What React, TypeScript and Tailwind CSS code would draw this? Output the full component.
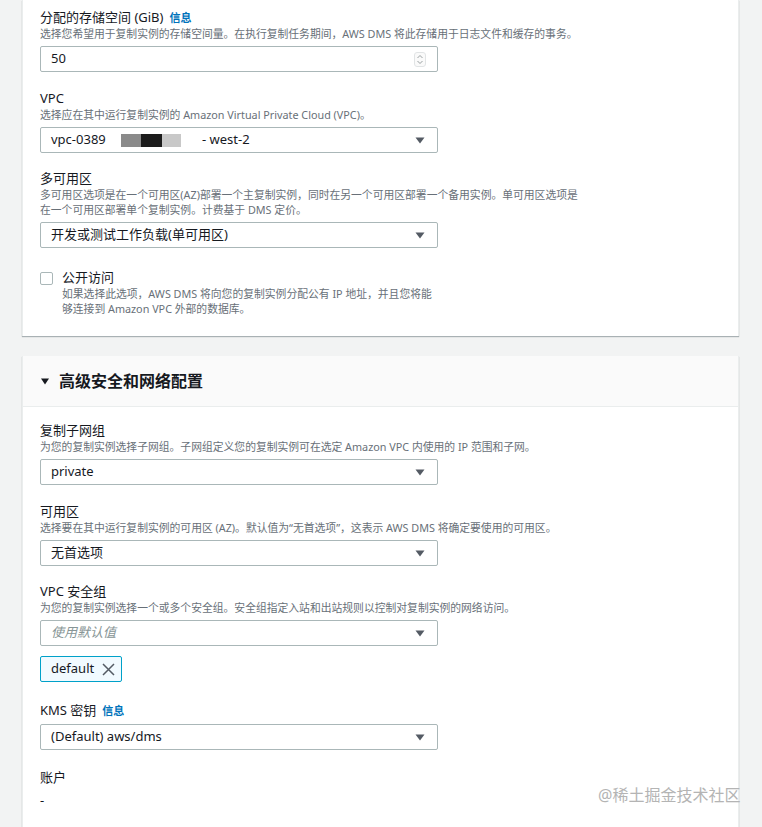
import React from "react";

function Label({ children, info }: { children: React.ReactNode; info?: boolean }) {
  return (
    <div className="text-[13px] leading-[17px] text-[#16191f]">
      {children}
      {info && <span className="ml-[6px] text-[11px] font-bold text-[#0073bb]">信息</span>}
    </div>
  );
}

function Desc({ children }: { children: React.ReactNode }) {
  return <div className="text-[10.8px] leading-[15px] text-[#687078]">{children}</div>;
}

function Caret() {
  return (
    <svg width="10" height="7" viewBox="0 0 10 7" className="shrink-0">
      <path d="M0.5 0.5h9L5 6.5z" fill="#545b64" />
    </svg>
  );
}

function Select({ children, placeholder }: { children?: React.ReactNode; placeholder?: string }) {
  return (
    <div className="mt-[5px] flex h-[26px] w-[398px] items-center justify-between rounded-[2px] border border-[#aab7b8] bg-white pl-[10px] pr-[12px] text-[13px] text-[#16191f]">
      {placeholder ? (
        <span className="italic text-[#879596]">{placeholder}</span>
      ) : (
        <div className="flex items-center">{children}</div>
      )}
      <Caret />
    </div>
  );
}

export default function App() {
  return (
    <div className="relative min-h-[827px] bg-[#f2f3f3] pl-[22px] pr-[23px] pb-[20px] font-['Noto_Sans','Noto_Sans_CJK_SC',sans-serif]">
      {/* 第一张卡片（顶部已滚出视口） */}
      <div className="border-x border-[#eaeded] bg-white px-[17px] pt-[9px] pb-[20px] shadow-[0_1px_1px_0_rgba(0,28,36,0.3)]">
        <div>
          <Label info>分配的存储空间 (GiB)</Label>
          <Desc>选择您希望用于复制实例的存储空间量。在执行复制任务期间，AWS DMS 将此存储用于日志文件和缓存的事务。</Desc>
          <div className="mt-[5px] flex h-[26px] w-[398px] items-center justify-between rounded-[2px] border border-[#aab7b8] bg-white pl-[10px] pr-[11px] text-[13px] text-[#16191f]">
            <span>50</span>
            <svg width="12" height="15" viewBox="0 0 12 15">
              <rect x="0.5" y="0.5" width="11" height="14" rx="2.5" fill="#fafafa" stroke="#e1e4e5" />
              <path d="M3.5 6l2.5-2.5L8.5 6M3.5 9l2.5 2.5L8.5 9" fill="none" stroke="#8d9596" strokeWidth="0.9" />
            </svg>
          </div>
        </div>

        <div className="mt-[18px]">
          <Label>VPC</Label>
          <Desc>选择应在其中运行复制实例的 Amazon Virtual Private Cloud (VPC)。</Desc>
          <Select>
            <span className="inline-block w-[53px] whitespace-nowrap">vpc-0389</span>
            <span className="ml-[17px] flex h-[13px] items-stretch">
              <span className="w-[20px] bg-[#8a8a8a]" />
              <span className="w-[21px] bg-[#1c1c1c]" />
              <span className="w-[19px] bg-[#c8c8c8]" />
            </span>
            <span className="ml-[21px]">- west-2</span>
          </Select>
        </div>

        <div className="mt-[17px]">
          <Label>多可用区</Label>
          <Desc>
            多可用区选项是在一个可用区(AZ)部署一个主复制实例，同时在另一个可用区部署一个备用实例。单可用区选项是
            <br />
            在一个可用区部署单个复制实例。计费基于 DMS 定价。
          </Desc>
          <Select>开发或测试工作负载(单可用区)</Select>
        </div>

        <div className="mt-[21px] flex gap-[9px]">
          <div className="mt-[3px] h-[13px] w-[13px] shrink-0 rounded-[2px] border border-[#aab7b8] bg-white" />
          <div>
            <div className="text-[13px] leading-[17px] text-[#16191f]">公开访问</div>
            <div className="text-[10.8px] leading-[15px] text-[#687078]">
              如果选择此选项，AWS DMS 将向您的复制实例分配公有 IP 地址，并且您将能
              <br />
              够连接到 Amazon VPC 外部的数据库。
            </div>
          </div>
        </div>
      </div>

      {/* 高级安全和网络配置 */}
      <div className="mt-[20px] border-x border-[#eaeded] bg-white shadow-[0_1px_1px_0_rgba(0,28,36,0.3)]">
        <div className="flex h-[51px] items-center border-b border-[#eaeded] bg-[#fafafa] px-[18px]">
          <svg width="8" height="7" viewBox="0 0 8 7" className="mr-[10px]">
            <path d="M0 0.5h8L4 6.5z" fill="#16191f" />
          </svg>
          <span className="text-[16px] font-bold text-[#16191f]">高级安全和网络配置</span>
        </div>

        <div className="px-[17px] pt-[15px] pb-[30px]">
          <div>
            <Label>复制子网组</Label>
            <Desc>为您的复制实例选择子网组。子网组定义您的复制实例可在选定 Amazon VPC 内使用的 IP 范围和子网。</Desc>
            <Select>private</Select>
          </div>

          <div className="mt-[18px]">
            <Label>可用区</Label>
            <Desc>选择要在其中运行复制实例的可用区 (AZ)。默认值为“无首选项”，这表示 AWS DMS 将确定要使用的可用区。</Desc>
            <Select>无首选项</Select>
          </div>

          <div className="mt-[17px]">
            <Label>VPC 安全组</Label>
            <Desc>为您的复制实例选择一个或多个安全组。安全组指定入站和出站规则以控制对复制实例的网络访问。</Desc>
            <Select placeholder="使用默认值" />
            <div className="mt-[10px] inline-flex h-[26px] items-center gap-[8px] rounded-[2px] border border-[#00a1c9] bg-[#f1faff] pl-[10px] pr-[6px] text-[13px] text-[#16191f]">
              <span>default</span>
              <svg width="13" height="13" viewBox="0 0 13 13">
                <path d="M1 1l11 11M12 1L1 12" stroke="#545b64" strokeWidth="1.5" />
              </svg>
            </div>
          </div>

          <div className="mt-[20px]">
            <Label info>KMS 密钥</Label>
            <Select>(Default) aws/dms</Select>
          </div>

          <div className="mt-[19px]">
            <Label>账户</Label>
            <div className="mt-[6px] text-[13px] leading-[17px] text-[#16191f]">-</div>
          </div>
        </div>
      </div>

      <div className="absolute left-[598px] top-[784px] text-[16px] leading-[22px] text-[#b4b4b4]">@稀土掘金技术社区</div>
    </div>
  );
}
